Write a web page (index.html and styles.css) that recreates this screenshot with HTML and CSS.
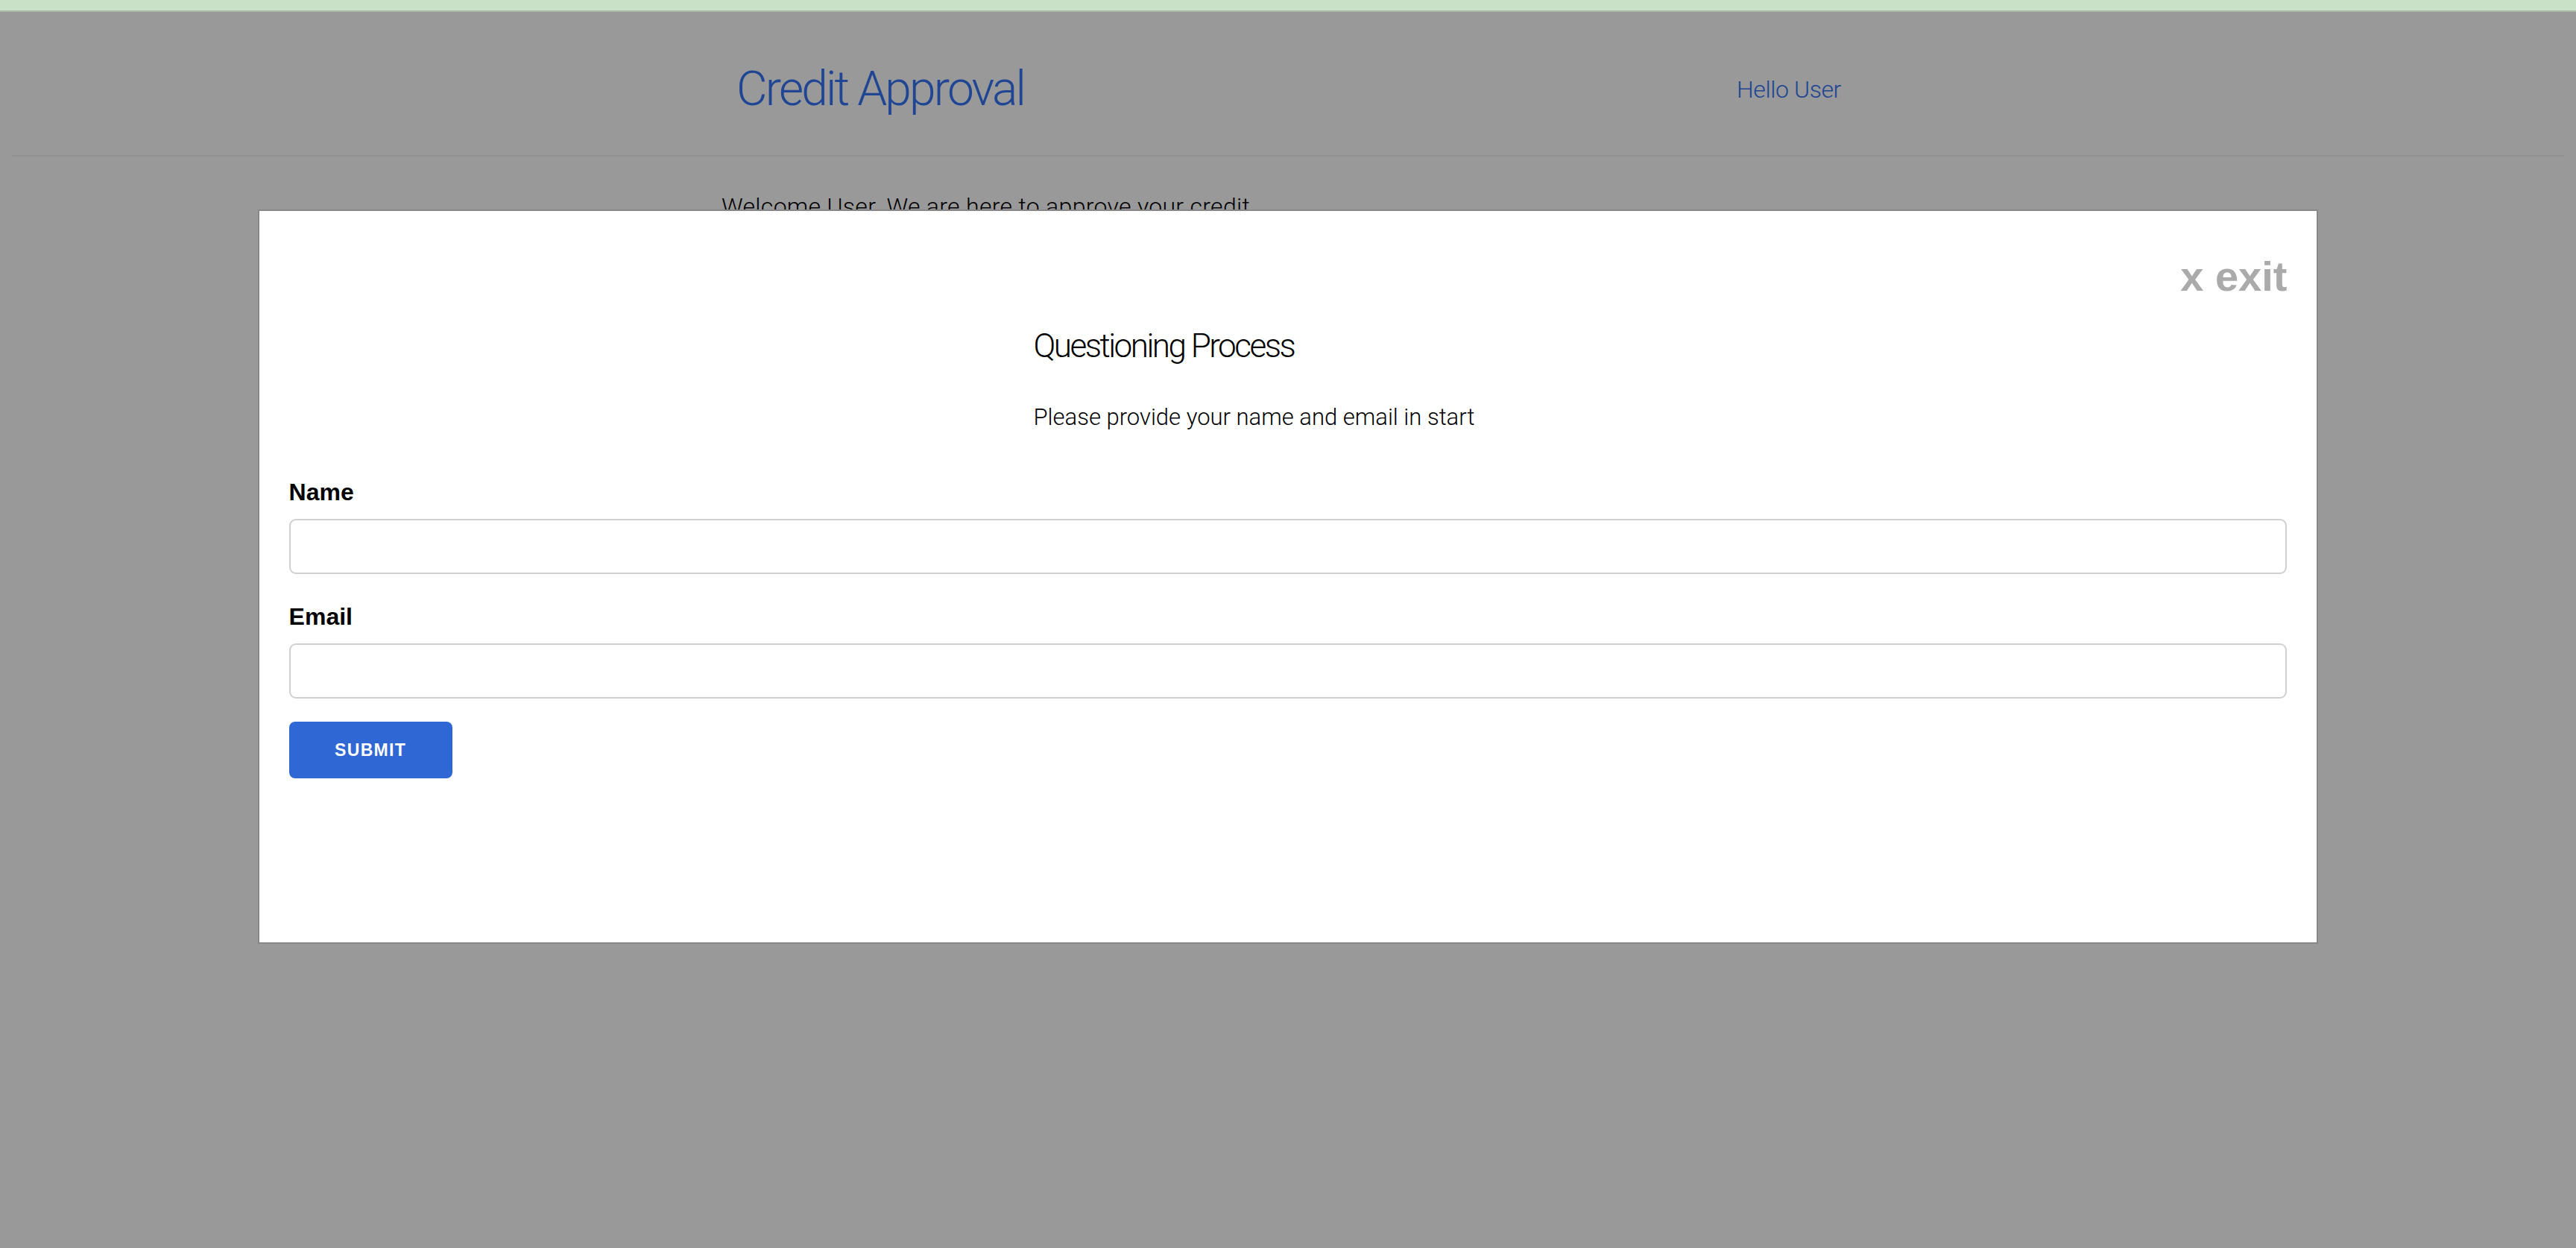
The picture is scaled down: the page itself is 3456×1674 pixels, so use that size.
FILE: index.html
```html
<!DOCTYPE html>
<html lang="en">
<head>
<meta charset="utf-8">
<title>Credit Approval</title>
<link rel="stylesheet" href="styles.css">
</head>
<body>
<div class="topbar"></div>
<div class="page">
  <header class="site-header">
    <div class="container header-inner">
      <h1 class="brand">Credit Approval</h1>
      <span class="greeting">Hello User</span>
    </div>
  </header>
  <main class="container content">
    <p class="welcome">Welcome User. We are here to approve your credit</p>
  </main>
</div>
<div class="overlay">
  <div class="modal">
    <div class="modal-close">x exit</div>
    <div class="intro">
      <h2 class="intro-title">Questioning Process</h2>
      <p class="intro-text">Please provide your name and email in start</p>
    </div>
    <form class="form">
      <label class="field-label" for="name">Name</label>
      <input class="field-input" id="name" type="text">
      <label class="field-label field-label-second" for="email">Email</label>
      <input class="field-input" id="email" type="email">
      <button class="submit" type="button">SUBMIT</button>
    </form>
  </div>
</div>
</body>
</html>
```

FILE: styles.css
```css
* { box-sizing: border-box; }

html, body {
  margin: 0;
  padding: 0;
  height: 100%;
  background: #ffffff;
}

body {
  font-family: Roboto, "Liberation Sans", sans-serif;
  color: #000;
  overflow: hidden;
}

.topbar {
  height: 16px;
  background: #c9e1c7;
  border-bottom: 2px solid #aab9a8;
}

.page {
  padding: 0 16px;
}

.site-header {
  padding-top: 72px;
  padding-bottom: 56px;
  border-bottom: 2px solid #f0f0f0;
}

.container {
  width: 1520px;
  margin: 0 auto;
}

.header-inner {
  display: flex;
  align-items: center;
  justify-content: space-between;
  padding: 0 18px 0 20px;
}

.brand {
  margin: 0;
  font-size: 64px;
  line-height: 1;
  font-weight: 300;
  letter-spacing: -2.8px;
  color: #3473f5;
}

.greeting {
  font-size: 32px;
  line-height: 1;
  font-weight: 300;
  letter-spacing: -0.4px;
  color: #3473f5;
}

.content {
  padding-top: 51px;
}

.welcome {
  margin: 0;
  font-size: 32px;
  line-height: 1;
  font-weight: 300;
  letter-spacing: 0.3px;
}

.overlay {
  position: fixed;
  top: 16px;
  left: 0;
  right: 0;
  bottom: 0;
  background: rgba(0, 0, 0, 0.4);
  display: flex;
  justify-content: center;
  align-items: flex-start;
  padding-top: 265px;
}

.modal {
  width: 80%;
  background: #ffffff;
  border: 2px solid #878787;
  padding: 60px 40px 220px;
}

.modal-close {
  text-align: right;
  font-family: "Liberation Sans", Arial, sans-serif;
  font-weight: 700;
  font-size: 56px;
  line-height: 1;
  color: #aaaaaa;
}

.intro {
  width: 683px;
  margin: 43px auto 0;
}

.intro-title {
  margin: 0;
  font-size: 44px;
  line-height: 1;
  font-weight: 300;
  letter-spacing: -2.5px;
}

.intro-text {
  margin: 58px 0 0;
  font-size: 31px;
  line-height: 1;
  font-weight: 300;
  letter-spacing: 0;
}

.form {
  display: flex;
  flex-direction: column;
  align-items: flex-start;
  margin-top: 69px;
}

.field-label {
  font-family: "Liberation Sans", Arial, sans-serif;
  font-weight: 700;
  font-size: 32px;
  line-height: 1;
}

.field-label-second {
  margin-top: 41px;
}

.field-input {
  margin-top: 20px;
  width: 100%;
  height: 74px;
  border: 2px solid #d0d0d0;
  border-radius: 9px;
  background: #fff;
  font-size: 30px;
  padding: 0 16px;
}

.submit {
  margin-top: 31px;
  width: 219px;
  height: 76px;
  border: none;
  border-radius: 8px;
  background: #2f68d4;
  color: #fff;
  font-family: "Liberation Sans", Arial, sans-serif;
  font-weight: 700;
  font-size: 23px;
  letter-spacing: 1.3px;
  padding: 0;
}
```
